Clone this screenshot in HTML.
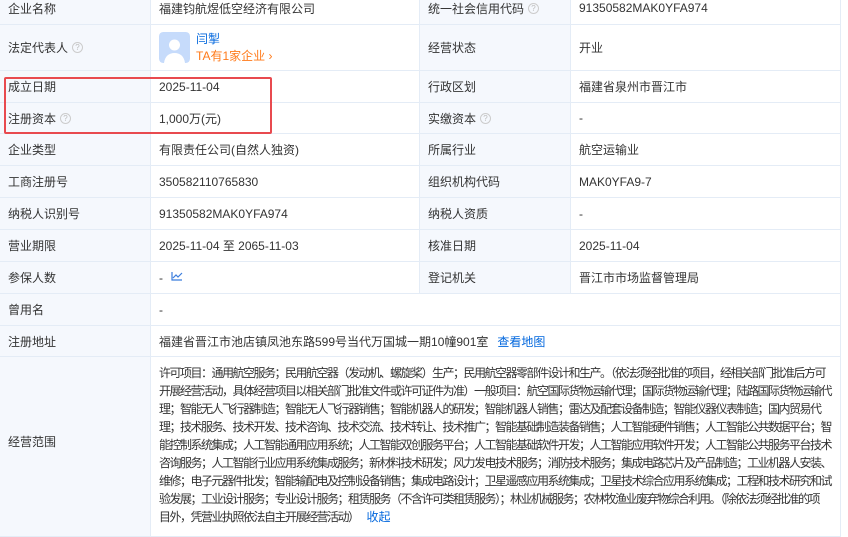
<!DOCTYPE html>
<html><head><meta charset="utf-8"><style>
*{margin:0;padding:0;box-sizing:border-box}
body{width:848px;height:527px;overflow:hidden;background:#fff;font-family:"Liberation Sans","Noto Sans CJK SC",sans-serif;font-size:12px;color:#333;position:relative}
.c{position:absolute;border-right:1px solid #e4ecf6;border-bottom:1px solid #e4ecf6;display:flex;align-items:center;padding-left:8px;white-space:nowrap}
.l{background:#f5f8fd}
.q{display:inline-block;width:11px;height:11px;border:1px solid #ccc;border-radius:50%;color:#bbb;font-size:8px;line-height:9px;text-align:center;margin-left:4px}
.scope{position:absolute;left:159px;top:364px;line-height:18px;white-space:nowrap;font-size:12px;color:#333;letter-spacing:-1.5px}
a{color:#0066dd;text-decoration:none}
</style></head><body>
<div class="c l" style="left:0;top:-8px;width:151px;height:33px">企业名称</div>
<div class="c" style="left:151px;top:-8px;width:269px;height:33px">福建钧航煜低空经济有限公司</div>
<div class="c l" style="left:420px;top:-8px;width:151px;height:33px">统一社会信用代码<span class="q">?</span></div>
<div class="c" style="left:571px;top:-8px;width:270px;height:33px">91350582MAK0YFA974</div>

<div class="c l" style="left:0;top:25px;width:151px;height:46px">法定代表人<span class="q">?</span></div>
<div class="c" style="left:151px;top:25px;width:269px;height:46px">
<svg width="31" height="31" viewBox="0 0 31 31" style="border-radius:4px"><rect width="31" height="31" rx="4" fill="#c6dbfb"/><circle cx="15.5" cy="13" r="5.5" fill="#fff"/><path d="M5 31c1-7 5-10 10.5-10S25 24 26 31z" fill="#fff"/></svg>
<div style="margin-left:6px;line-height:17px"><div style="color:#0066dd">闫掣</div><div style="color:#ff7a1a">TA有1家企业 ›</div></div></div>
<div class="c l" style="left:420px;top:25px;width:151px;height:46px">经营状态</div>
<div class="c" style="left:571px;top:25px;width:270px;height:46px">开业</div>

<div class="c l" style="left:0;top:71px;width:151px;height:32px">成立日期</div>
<div class="c" style="left:151px;top:71px;width:269px;height:32px">2025-11-04</div>
<div class="c l" style="left:420px;top:71px;width:151px;height:32px">行政区划</div>
<div class="c" style="left:571px;top:71px;width:270px;height:32px">福建省泉州市晋江市</div>

<div class="c l" style="left:0;top:103px;width:151px;height:31px">注册资本<span class="q">?</span></div>
<div class="c" style="left:151px;top:103px;width:269px;height:31px">1,000万(元)</div>
<div class="c l" style="left:420px;top:103px;width:151px;height:31px">实缴资本<span class="q">?</span></div>
<div class="c" style="left:571px;top:103px;width:270px;height:31px">-</div>

<div class="c l" style="left:0;top:134px;width:151px;height:32px">企业类型</div>
<div class="c" style="left:151px;top:134px;width:269px;height:32px">有限责任公司(自然人独资)</div>
<div class="c l" style="left:420px;top:134px;width:151px;height:32px">所属行业</div>
<div class="c" style="left:571px;top:134px;width:270px;height:32px">航空运输业</div>

<div class="c l" style="left:0;top:166px;width:151px;height:32px">工商注册号</div>
<div class="c" style="left:151px;top:166px;width:269px;height:32px">350582110765830</div>
<div class="c l" style="left:420px;top:166px;width:151px;height:32px">组织机构代码</div>
<div class="c" style="left:571px;top:166px;width:270px;height:32px">MAK0YFA9-7</div>

<div class="c l" style="left:0;top:198px;width:151px;height:32px">纳税人识别号</div>
<div class="c" style="left:151px;top:198px;width:269px;height:32px">91350582MAK0YFA974</div>
<div class="c l" style="left:420px;top:198px;width:151px;height:32px">纳税人资质</div>
<div class="c" style="left:571px;top:198px;width:270px;height:32px">-</div>

<div class="c l" style="left:0;top:230px;width:151px;height:32px">营业期限</div>
<div class="c" style="left:151px;top:230px;width:269px;height:32px">2025-11-04 至 2065-11-03</div>
<div class="c l" style="left:420px;top:230px;width:151px;height:32px">核准日期</div>
<div class="c" style="left:571px;top:230px;width:270px;height:32px">2025-11-04</div>

<div class="c l" style="left:0;top:262px;width:151px;height:32px">参保人数</div>
<div class="c" style="left:151px;top:262px;width:269px;height:32px">- <svg width="12" height="10" viewBox="0 0 12 10" style="margin-left:8px;margin-top:-4px"><path d="M1 1v8h10M2 7l3-3 2 2 4-4" stroke="#3b7ddd" fill="none" stroke-width="1.2"/></svg></div>
<div class="c l" style="left:420px;top:262px;width:151px;height:32px">登记机关</div>
<div class="c" style="left:571px;top:262px;width:270px;height:32px">晋江市市场监督管理局</div>

<div class="c l" style="left:0;top:294px;width:151px;height:32px">曾用名</div>
<div class="c" style="left:151px;top:294px;width:690px;height:32px">-</div>

<div class="c l" style="left:0;top:326px;width:151px;height:31px">注册地址</div>
<div class="c" style="left:151px;top:326px;width:690px;height:31px">福建省晋江市池店镇凤池东路599号当代万国城一期10幢901室<a style="margin-left:9px">查看地图</a></div>

<div class="c l" style="left:0;top:357px;width:151px;height:180px;padding-bottom:10px">经营范围</div>
<div class="c" style="left:151px;top:357px;width:690px;height:180px"></div>
<div class="scope">
<div>许可项目：通用航空服务；民用航空器（发动机、螺旋桨）生产；民用航空器零部件设计和生产。（依法须经批准的项目，经相关部门批准后方可</div>
<div>开展经营活动，具体经营项目以相关部门批准文件或许可证件为准）一般项目：航空国际货物运输代理；国际货物运输代理；陆路国际货物运输代</div>
<div>理；智能无人飞行器制造；智能无人飞行器销售；智能机器人的研发；智能机器人销售；雷达及配套设备制造；智能仪器仪表制造；国内贸易代</div>
<div>理；技术服务、技术开发、技术咨询、技术交流、技术转让、技术推广；智能基础制造装备销售；人工智能硬件销售；人工智能公共数据平台；智</div>
<div>能控制系统集成；人工智能通用应用系统；人工智能双创服务平台；人工智能基础软件开发；人工智能应用软件开发；人工智能公共服务平台技术</div>
<div>咨询服务；人工智能行业应用系统集成服务；新材料技术研发；风力发电技术服务；消防技术服务；集成电路芯片及产品制造；工业机器人安装、</div>
<div>维修；电子元器件批发；智能输配电及控制设备销售；集成电路设计；卫星遥感应用系统集成；卫星技术综合应用系统集成；工程和技术研究和试</div>
<div>验发展；工业设计服务；专业设计服务；租赁服务（不含许可类租赁服务）；林业机械服务；农林牧渔业废弃物综合利用。（除依法须经批准的项</div>
<div>目外，凭营业执照依法自主开展经营活动）<a style="margin-left:8px;letter-spacing:0">收起</a></div>
</div>

<div style="position:absolute;left:4px;top:77px;width:268px;height:57px;border:2px solid #e84a4f;border-radius:2px"></div>
</body></html>
